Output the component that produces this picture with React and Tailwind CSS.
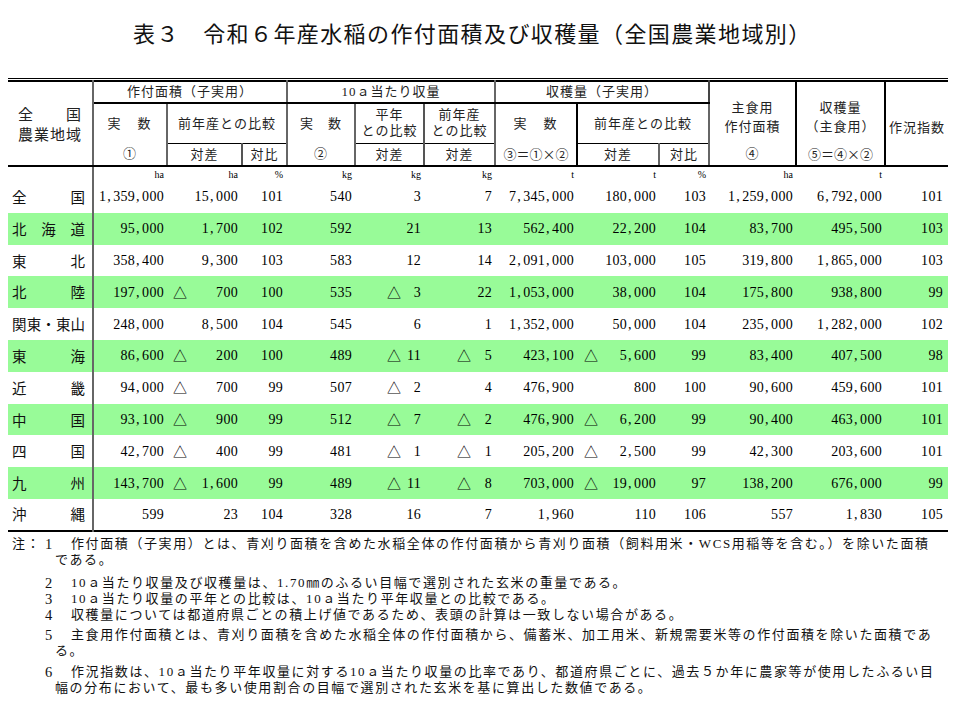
import React from "react";

const rows = [
  ["全国", "1,359,000", "15,000", "101", "540", "3", "7", "7,345,000", "180,000", "103", "1,259,000", "6,792,000", "101"],
  ["北海道", "95,000", "1,700", "102", "592", "21", "13", "562,400", "22,200", "104", "83,700", "495,500", "103"],
  ["東北", "358,400", "9,300", "103", "583", "12", "14", "2,091,000", "103,000", "105", "319,800", "1,865,000", "103"],
  ["北陸", "197,000", "△700", "100", "535", "△3", "22", "1,053,000", "38,000", "104", "175,800", "938,800", "99"],
  ["関東・東山", "248,000", "8,500", "104", "545", "6", "1", "1,352,000", "50,000", "104", "235,000", "1,282,000", "102"],
  ["東海", "86,600", "△200", "100", "489", "△11", "△5", "423,100", "△5,600", "99", "83,400", "407,500", "98"],
  ["近畿", "94,000", "△700", "99", "507", "△2", "4", "476,900", "800", "100", "90,600", "459,600", "101"],
  ["中国", "93,100", "△900", "99", "512", "△7", "△2", "476,900", "△6,200", "99", "90,400", "463,000", "101"],
  ["四国", "42,700", "△400", "99", "481", "△1", "△1", "205,200", "△2,500", "99", "42,300", "203,600", "101"],
  ["九州", "143,700", "△1,600", "99", "489", "△11", "△8", "703,000", "△19,000", "97", "138,200", "676,000", "99"],
  ["沖縄", "599", "23", "104", "328", "16", "7", "1,960", "110", "106", "557", "1,830", "105"],
];

const units = ["ha", "ha", "%", "kg", "kg", "kg", "t", "t", "%", "ha", "t", ""];
const colWidths = [85, 74, 75, 45, 68, 69, 71, 82, 82, 50, 87, 89, 63];
const padRight = ["pr-[3px]", "pr-[4px]", "pr-[4px]", "pr-[3px]", "pr-[3px]", "pr-[3px]", "pr-[3px]", "pr-[3px]", "pr-[3px]", "pr-[3px]", "pr-[3px]", "pr-[5px]"];
const triPad = ["", "pl-[6px]", "", "", "pl-[32px]", "pl-[33px]", "", "pl-[7px]", "", "", "", ""];

const jp = "font-['Noto_Sans_CJK_JP',sans-serif]";

const Num = ({ value }) => {
  const parts = value.split(",");
  return (
    <span className="tracking-[0.3px]">
      {parts.map((p, i) => (
        <React.Fragment key={i}>
          {i > 0 && <span className="inline-block w-[7px] pl-px text-left">,</span>}
          {p}
        </React.Fragment>
      ))}
    </span>
  );
};

const Cell = ({ value, idx }) => {
  const tri = value.startsWith("△");
  const num = tri ? value.slice(1) : value;
  return (
    <td className="p-0">
      <div className={`flex items-center justify-between ${padRight[idx]}`}>
        <span className={`${triPad[idx]} ${jp} text-[14px]`}>{tri ? "△" : ""}</span>
        <Num value={num} />
      </div>
    </td>
  );
};

const notes = [
  { no: "1", lines: ["作付面積（子実用）とは、青刈り面積を含めた水稲全体の作付面積から青刈り面積（飼料用米・WCS用稲等を含む。）を除いた面積", "である。"], gap: "mb-[7px]", first: true },
  { no: "2", lines: ["10ａ当たり収量及び収穫量は、1.70㎜のふるい目幅で選別された玄米の重量である。"], gap: "" },
  { no: "3", lines: ["10ａ当たり収量の平年との比較は、10ａ当たり平年収量との比較である。"], gap: "" },
  { no: "4", lines: ["収穫量については都道府県ごとの積上げ値であるため、表頭の計算は一致しない場合がある。"], gap: "mb-[4px]" },
  { no: "5", lines: ["主食用作付面積とは、青刈り面積を含めた水稲全体の作付面積から、備蓄米、加工用米、新規需要米等の作付面積を除いた面積であ", "る。"], gap: "mb-[5px]" },
  { no: "6", lines: ["作況指数は、10ａ当たり平年収量に対する10ａ当たり収量の比率であり、都道府県ごとに、過去５か年に農家等が使用したふるい目", "幅の分布において、最も多い使用割合の目幅で選別された玄米を基に算出した数値である。"], gap: "" },
];

const th = "p-0 font-normal text-center align-middle text-[13px] tracking-[1px] text-[#222]";

const App = () => {
  return (
    <div className="w-[960px] h-[705px] bg-white text-black font-['Liberation_Serif','Noto_Sans_CJK_JP',serif] overflow-hidden">
      <div className="h-[78px] pt-[18px] pl-[133px]">
        <h1 className={`${jp} text-[22px] leading-[28px] tracking-[1.4px] text-[#111] whitespace-nowrap`}>
          表３　令和６年産水稲の作付面積及び収穫量（全国農業地域別）
        </h1>
      </div>

      <div className="ml-[8px] w-[940px] h-px bg-black" />
      <div className="h-px" />
      <table className="ml-[8px] w-[940px] table-fixed border-collapse border-t-2 border-t-black">
        <colgroup>
          {colWidths.map((w, i) => (
            <col key={i} style={{ width: w }} />
          ))}
        </colgroup>
        <thead>
          <tr className="h-[22px]">
            <th rowSpan={3} className={`${th} border-r-2 border-r-[#666] border-b-2 border-b-black`}>
              <div className="w-[64px] ml-[10px] text-[15px] leading-[20px] tracking-[1px] pt-[2px]">
                <div className="flex justify-between"><span>全</span><span>国</span></div>
                <div className="whitespace-nowrap">農業地域</div>
              </div>
            </th>
            <th colSpan={3} className={`${th} border-r-2 border-r-[#666] border-b-2 border-b-black`}>作付面積（子実用）</th>
            <th colSpan={3} className={`${th} border-r-2 border-r-[#666] border-b-2 border-b-black`}>10ａ当たり収量</th>
            <th colSpan={3} className={`${th} border-r-2 border-r-[#444] border-b-2 border-b-black`}>収穫量（子実用）</th>
            <th rowSpan={2} className={`${th} border-r-2 border-r-black leading-[19px] pt-[8px]`}>主食用<br />作付面積</th>
            <th rowSpan={2} className={`${th} border-r-2 border-r-black leading-[19px] pt-[8px]`}>収穫量<br />（主食用）</th>
            <th rowSpan={3} className={`${th} border-b-2 border-b-black pt-[8px]`}>作況指数</th>
          </tr>
          <tr className="h-[40px]">
            <th className={`${th} border-r-2 border-r-[#666] tracking-[2px]`}>実　数</th>
            <th colSpan={2} className={`${th} border-r-2 border-r-[#666] border-b border-b-black`}>前年産との比較</th>
            <th className={`${th} border-r-2 border-r-[#666] tracking-[1.5px]`}>実　数</th>
            <th className={`${th} border-r-2 border-r-[#555] border-b border-b-black leading-[16px]`}>平年<br />との比較</th>
            <th className={`${th} border-r-2 border-r-[#666] border-b border-b-black leading-[16px]`}>前年産<br />との比較</th>
            <th className={`${th} border-r-2 border-r-black tracking-[2px]`}>実　数</th>
            <th colSpan={2} className={`${th} border-r-2 border-r-[#666] border-b border-b-black`}>前年産との比較</th>
          </tr>
          <tr className="h-[23px]">
            <th className={`${th} border-r-2 border-r-[#666] border-b-2 border-b-black`}>①</th>
            <th className={`${th} border-r-2 border-r-[#555] border-b-2 border-b-black`}>対差</th>
            <th className={`${th} border-r-2 border-r-[#666] border-b-2 border-b-black`}>対比</th>
            <th className={`${th} border-r-2 border-r-[#666] border-b-2 border-b-black`}>②</th>
            <th className={`${th} border-r-2 border-r-[#555] border-b-2 border-b-black`}>対差</th>
            <th className={`${th} border-r-2 border-r-[#666] border-b-2 border-b-black`}>対差</th>
            <th className={`${th} ${jp} border-r-2 border-r-black border-b-2 border-b-black tracking-normal`}>③＝①×②</th>
            <th className={`${th} border-r-2 border-r-[#666] border-b-2 border-b-black`}>対差</th>
            <th className={`${th} border-r-2 border-r-[#666] border-b-2 border-b-black`}>対比</th>
            <th className={`${th} border-r-2 border-r-black border-b-2 border-b-black`}>④</th>
            <th className={`${th} ${jp} border-r-2 border-r-black border-b-2 border-b-black tracking-normal`}>⑤＝④×②</th>
          </tr>
        </thead>
        <tbody className="text-[14px] border-b-2 border-b-black">
          <tr className="h-[15px]">
            <td className="p-0 border-r-2 border-r-[#666]" />
            {units.map((u, i) => (
              <td key={i} className={`p-0 text-right text-[10px] leading-[12px] align-bottom ${padRight[i]}`}>{u}</td>
            ))}
          </tr>
          {rows.map((r, ri) => (
            <tr key={ri} className={`h-[31.8px] ${ri % 2 === 1 ? "bg-[#98fb98]" : ""}`}>
              <td className="p-0 border-r-2 border-r-[#666]">
                <div className={`flex justify-between pl-[4px] pr-[7px] ${jp} text-[14.5px] text-[#111]`}>
                  {r[0].split("").map((c, ci) => (
                    <span key={ci}>{c}</span>
                  ))}
                </div>
              </td>
              {r.slice(1).map((v, ci) => (
                <Cell key={ci} value={v} idx={ci} />
              ))}
            </tr>
          ))}
        </tbody>
      </table>

      <div className="pt-[4px] text-[13px] leading-[16px] tracking-[1.6px] text-[#111] whitespace-nowrap">
        {notes.map((n, i) => (
          <div key={i} className={n.gap}>
            <div className="flex">
              <div className="w-[71px] flex pl-[12px]">
                <span className="w-[33px]">{n.first ? "注：" : ""}</span>
                <span className="text-[14.5px]">{n.no}</span>
              </div>
              <span>{n.lines[0]}</span>
            </div>
            {n.lines[1] && <div className="pl-[55px]">{n.lines[1]}</div>}
          </div>
        ))}
      </div>
    </div>
  );
};

export default App;
